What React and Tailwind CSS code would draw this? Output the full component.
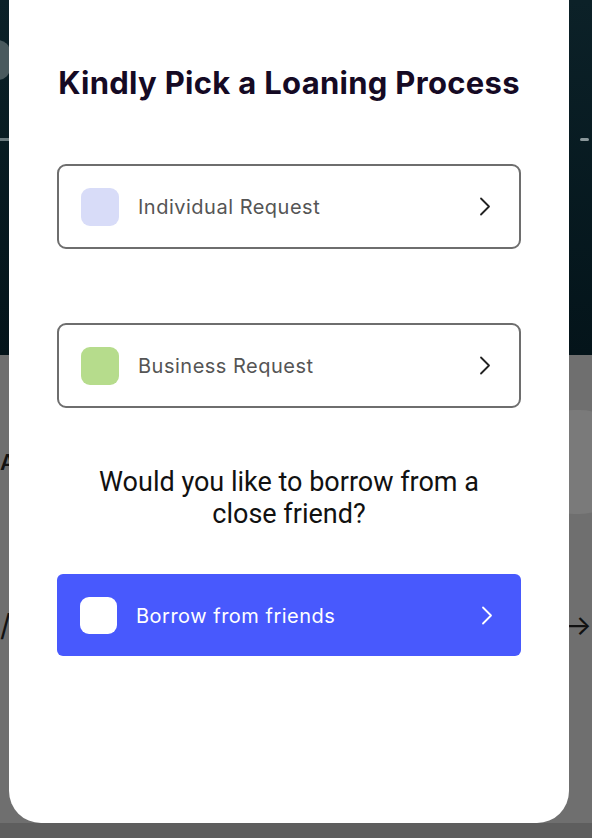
import React from 'react';

const Chevron = ({ className }) => (
  <svg width="12" height="19" viewBox="0 0 12 19" fill="none" className={className}>
    <polyline points="2,1.5 10,9.5 2,17.5" stroke="currentColor" strokeWidth="1.8" strokeLinecap="round" strokeLinejoin="round" />
  </svg>
);

const OptionCard = ({ label, swatch }) => (
  <button className="flex h-[85px] w-full items-center rounded-[9px] border-2 border-[#6e6e6e] bg-white pl-[22px] pr-[28px] text-left">
    <span className={`h-[38px] w-[38px] shrink-0 rounded-[9px] ${swatch}`} />
    <span className="ml-[19px] flex-1 pt-[1px] text-[20px] tracking-[0.5px] text-[#555555]">{label}</span>
    <Chevron className="text-[#222222]" />
  </button>
);

export default function App() {
  return (
    <div className="relative h-[838px] w-[592px] overflow-hidden bg-[#6f6f6f] font-['Inter',sans-serif]">
      {/* dimmed page behind the sheet */}
      <div className="flex h-[355px] flex-col bg-gradient-to-b from-[#0c2128] to-[#04141a]">
        <div className="mt-[40px] ml-[-14px] h-[40px] w-[24px] rounded-full bg-[#4a5a5e]" />
        <div className="mt-[58px] flex items-center justify-between">
          <div className="h-[3px] w-[10px] bg-[#6a7a7e]" />
          <div className="mr-[3px] h-[3px] w-[9px] rounded bg-[#8a979a]" />
        </div>
      </div>
      <div className="flex h-[355px] flex-col">
        <div className="mt-[55px] flex items-center justify-between">
          <span className="text-[22px] font-semibold leading-none text-[#111]">A</span>
          <div className="mr-[-40px] flex h-[104px] w-[110px] items-center rounded-full bg-[#7a7a7a] pl-[26px] text-[22px] font-semibold text-[#111]">n</div>
        </div>
        <div className="mt-[96px] flex items-center justify-between">
          <span className="text-[30px] leading-none text-[#111]">/</span>
          <span className="text-[28px] leading-none text-[#111]">→</span>
        </div>
        <div className="mt-[70px] h-px bg-[#7c7c7c]" />
      </div>
      <div className="absolute bottom-0 left-0 h-[15px] w-full bg-[#5e5e5e]" />

      {/* sheet */}
      <div className="absolute left-[9px] top-0 flex h-[823px] w-[560px] flex-col items-center rounded-b-[32px] bg-white px-[48px] pt-[62px]">
        <h1 className="whitespace-nowrap text-[31px] font-bold leading-[42px] tracking-[0.3px] text-[#150a24]">
          Kindly Pick a Loaning Process
        </h1>

        <div className="mt-[60px] w-full">
          <OptionCard label="Individual Request" swatch="bg-[#d8dcf8]" />
        </div>
        <div className="mt-[74px] w-full">
          <OptionCard label="Business Request" swatch="bg-[#b6dc8c]" />
        </div>

        <p className="mt-[58px] text-center font-['Roboto',sans-serif] text-[27px] leading-[32px] text-[#111111]">
          Would you like to borrow from a
          <br />
          close friend?
        </p>

        <button className="mt-[44px] flex h-[82px] w-full items-center rounded-[6px] bg-[#4859fd] pl-[23px] pr-[28px] text-left">
          <span className="h-[37px] w-[37px] shrink-0 rounded-[9px] bg-white" />
          <span className="ml-[19px] flex-1 pt-[1px] text-[20px] tracking-[0.5px] text-white">Borrow from friends</span>
          <Chevron className="text-white" />
        </button>
      </div>
    </div>
  );
}
